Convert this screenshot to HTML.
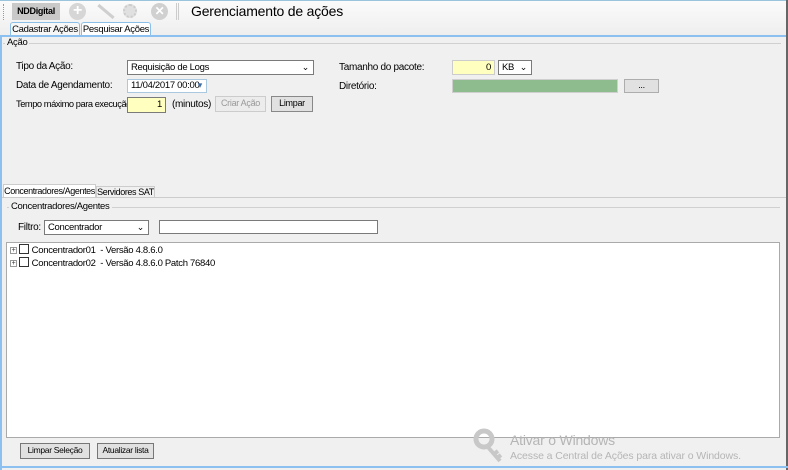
<!DOCTYPE html>
<html><head><meta charset="utf-8"><style>
*{box-sizing:border-box;margin:0;padding:0;white-space:nowrap}
body{width:788px;height:470px;overflow:hidden;background:#f0f0f0;font-family:"Liberation Sans",sans-serif;font-size:10px;color:#000;position:relative;letter-spacing:-0.3px}
.a{position:absolute}
.inp{position:absolute;background:#fff;border:1px solid #7a7a7a;padding:1px 3px;font-size:9.5px;line-height:11px;overflow:hidden}
.btn{position:absolute;background:#e1e1e1;border:1px solid #adadad;text-align:center;font-size:9px;line-height:13px;overflow:hidden}
.chev{position:absolute;right:4px;top:1px;font-size:9px}
</style></head><body>
<div class="a" style="left:0;top:0;width:788px;height:36px;background:linear-gradient(#fbfbfb,#eeeeee);border-top:1px solid #9cc3dc"></div>
<div class="a" style="left:3px;top:4px;width:1px;height:16px;border-left:1px dotted #999"></div>
<div class="a" style="left:12px;top:3px;width:48px;height:17px;background:#c9c9c9;font-weight:bold;font-size:9px;line-height:17px;text-align:center">NDDigital</div>
<div class="a" style="left:69px;top:3px;width:17px;height:17px;border-radius:50%;background:#d6d6d6;color:#fff;font-size:16px;line-height:16px;text-align:center;font-weight:bold">+</div>
<div class="a" style="left:96px;top:10px;width:20px;height:3px;background:#cfcfcf;transform:rotate(40deg)"></div>
<div class="a" style="left:123px;top:4px;width:14px;height:14px;border-radius:50%;background:#e0e0e0;border:2px dotted #ccc"></div>
<div class="a" style="left:151px;top:3px;width:17px;height:17px;border-radius:50%;background:#d0d0d0;color:#fff;font-size:12px;line-height:17px;text-align:center;font-weight:bold">✕</div>
<div class="a" style="left:176px;top:3px;width:3px;height:17px;border-left:1px solid #ccc;border-right:1px solid #ccc"></div>
<div class="a" style="left:191px;top:3px;font-size:14px;letter-spacing:-0.2px">Gerenciamento de ações</div>
<div class="a" style="left:10px;top:22px;width:70px;height:15px;background:#f7f7f7;border:1px solid #8cbfe8;border-bottom:none;border-radius:3px 3px 0 0;text-align:center;line-height:13px;font-size:9.5px">Cadastrar Ações</div>
<div class="a" style="left:81px;top:22px;width:70px;height:14px;background:#fff;border:1px solid #8cbfe8;border-bottom:none;border-radius:3px 3px 0 0;text-align:center;line-height:13px;font-size:9.5px">Pesquisar Ações</div>
<div class="a" style="left:0;top:35px;width:788px;height:2px;background:#8cc0f0"></div>
<div class="a" style="left:0;top:36px;width:2px;height:434px;background:#8cc0f0"></div>
<div class="a" style="left:786px;top:0;width:2px;height:470px;background:#666"></div>
<div class="a" style="left:0;top:466px;width:788px;height:2px;background:#8cc0f0"></div>
<div class="a" style="left:3px;top:43px;width:778px;height:1px;background:#d0d0d0"></div>
<div class="a" style="left:5px;top:37px;background:#f0f0f0;padding:0 2px;font-size:9.5px">Ação</div>
<div class="a" style="left:16px;top:61px">Tipo da Ação:</div>
<div class="inp" style="left:127px;top:60px;width:187px;height:15px">Requisição de Logs<span class="chev">⌄</span></div>
<div class="a" style="left:16px;top:80px">Data de Agendamento:</div>
<div class="inp" style="left:127px;top:79px;width:80px;height:14px;border-color:#aac8e0;padding:0 3px">11/04/2017 00:00<span class="chev" style="color:#3a6ea5;top:0">▾</span></div>
<div class="a" style="left:16px;top:99px;font-size:9.3px;letter-spacing:-0.45px">Tempo máximo para execução:</div>
<div class="inp" style="left:127px;top:97px;width:39px;height:16px;background:#ffffc0;text-align:right">1</div>
<div class="a" style="left:172px;top:99px">(minutos)</div>
<div class="btn" style="left:215px;top:96px;width:51px;height:16px;color:#999;background:#ececec;border-color:#ccc">Criar Ação</div>
<div class="btn" style="left:271px;top:96px;width:42px;height:16px;border-color:#888">Limpar</div>
<div class="a" style="left:339px;top:62px">Tamanho do pacote:</div>
<div class="inp" style="left:452px;top:60px;width:43px;height:15px;background:#ffffc0;text-align:right;border-color:#ccc">0</div>
<div class="inp" style="left:498px;top:60px;width:34px;height:15px">KB<span class="chev">⌄</span></div>
<div class="a" style="left:339px;top:81px">Diretório:</div>
<div class="a" style="left:452px;top:79px;width:166px;height:14px;background:#8fbc8f;border:1px solid #cfcfcf"></div>
<div class="btn" style="left:624px;top:79px;width:35px;height:14px;line-height:10px">...</div>
<div class="a" style="left:3px;top:184px;width:93px;height:14px;background:#fff;border:1px solid #ccc;border-bottom:none;line-height:13px;text-align:center;font-size:9px;letter-spacing:-0.4px;overflow:hidden">Concentradores/Agentes</div>
<div class="a" style="left:96px;top:186px;width:59px;height:12px;background:#f0f0f0;border:1px solid #ccc;border-bottom:none;line-height:11px;text-align:center;font-size:9px;letter-spacing:-0.4px;overflow:hidden">Servidores SAT</div>
<div class="a" style="left:2px;top:197px;width:784px;height:269px;border-top:1px solid #ccc"></div>
<div class="a" style="left:7px;top:207px;width:773px;height:1px;background:#d0d0d0"></div>
<div class="a" style="left:9px;top:201px;background:#f0f0f0;padding:0 2px;font-size:9.5px">Concentradores/Agentes</div>
<div class="a" style="left:18px;top:222px">Filtro:</div>
<div class="inp" style="left:44px;top:220px;width:105px;height:15px">Concentrador<span class="chev">⌄</span></div>
<div class="inp" style="left:159px;top:220px;width:219px;height:14px"></div>
<div class="a" style="left:6px;top:242px;width:774px;height:196px;background:#fff;border:1px solid #aaa"></div>
<div class="a" style="left:10px;top:244px;font-size:9.5px;line-height:13px">
<div><span style="display:inline-block;width:7px;height:7px;border:1px solid #999;font-size:7px;line-height:5px;text-align:center;color:#333;vertical-align:1px">+</span> <span style="display:inline-block;width:10px;height:10px;border:1px solid #333;vertical-align:-1px"></span> Concentrador01&nbsp; - Versão 4.8.6.0</div>
<div><span style="display:inline-block;width:7px;height:7px;border:1px solid #999;font-size:7px;line-height:5px;text-align:center;color:#333;vertical-align:1px">+</span> <span style="display:inline-block;width:10px;height:10px;border:1px solid #333;vertical-align:-1px"></span> Concentrador02&nbsp; - Versão 4.8.6.0 Patch 76840</div>
</div>
<div class="btn" style="left:20px;top:443px;width:70px;height:16px;border-color:#777;font-size:8.5px">Limpar Seleção</div>
<div class="btn" style="left:97px;top:443px;width:57px;height:16px;border-color:#777;font-size:8.5px">Atualizar lista</div>
<svg class="a" style="left:472px;top:428px" width="34" height="40"><circle cx="12" cy="11" r="8" fill="none" stroke="#c8c8c8" stroke-width="5"/><path d="M15 18 L28 33 M22 26 L26 23 M25 30 L29 27" stroke="#c8c8c8" stroke-width="4" fill="none"/></svg>
<div class="a" style="left:510px;top:432px;font-size:14px;color:#b5b5b5;letter-spacing:-0.2px">Ativar o Windows</div>
<div class="a" style="left:510px;top:450px;font-size:10.5px;color:#b5b5b5;letter-spacing:-0.1px">Acesse a Central de Ações para ativar o Windows.</div>
</body></html>
